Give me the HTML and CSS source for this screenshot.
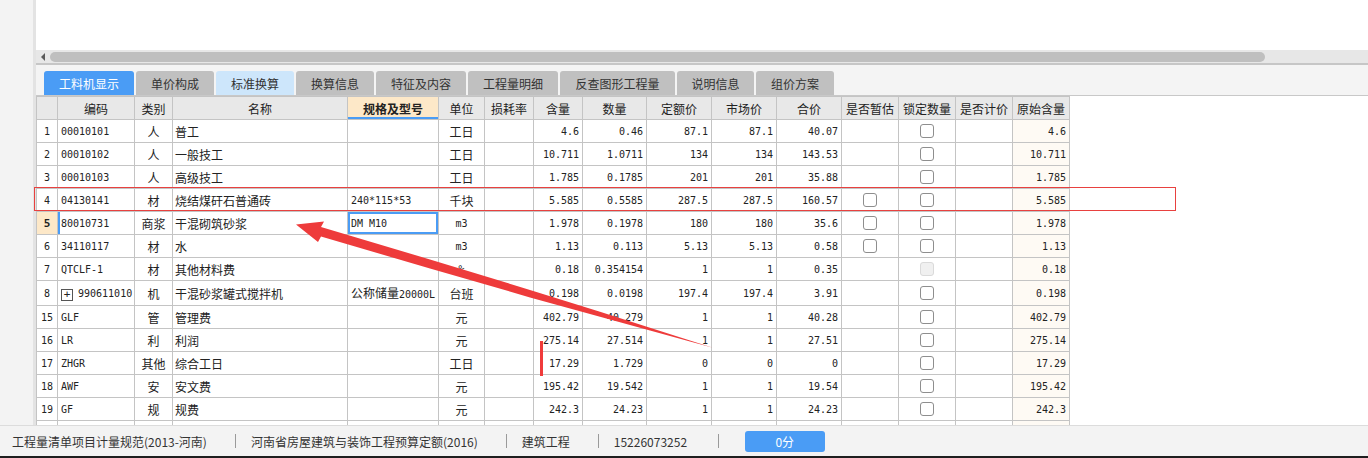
FILE: index.html
```html
<!DOCTYPE html>
<html lang="zh-CN">
<head>
<meta charset="utf-8">
<title>工料机显示</title>
<link rel="stylesheet" href="styles.css">
</head>
<body>
<div class="app">
  <div class="main">
    <aside class="sidebar"></aside>
    <section class="content">
      <div class="top-blank"></div>
      <div class="hscroll"><span class="arrow-left"></span><span class="thumb"></span></div>
      <nav class="tabs">
        <span class="tab active t90">工料机显示</span>
        <span class="tab t78">单价构成</span>
        <span class="tab light t78">标准换算</span>
        <span class="tab t78">换算信息</span>
        <span class="tab t90">特征及内容</span>
        <span class="tab t90">工程量明细</span>
        <span class="tab t115">反查图形工程量</span>
        <span class="tab t77">说明信息</span>
        <span class="tab t78">组价方案</span>
      </nav>
      <div class="grid-wrap">
        <table class="grid">
          <colgroup>
            <col class="w21"><col class="w77"><col class="w38"><col class="w175"><col class="w91"><col class="w46"><col class="w49"><col class="w49"><col class="w64"><col class="w65"><col class="w65"><col class="w65"><col class="w57"><col class="w57"><col class="w57"><col class="w57">
          </colgroup>
          <thead>
            <tr>
              <th></th><th>编码</th><th>类别</th><th>名称</th><th class="hl">规格及型号</th><th>单位</th><th>损耗率</th><th>含量</th><th>数量</th><th>定额价</th><th>市场价</th><th>合价</th><th>是否暂估</th><th>锁定数量</th><th>是否计价</th><th>原始含量</th>
            </tr>
          </thead>
          <tbody>
            <tr>
              <td class="n">1</td><td class="code">00010101</td><td class="cat">人</td><td class="name">普工</td><td class="spec"></td><td class="cat">工日</td><td></td><td class="r">4.6</td><td class="r">0.46</td><td class="r">87.1</td><td class="r">87.1</td><td class="r">40.07</td><td></td><td class="ck"><span class="cb"></span></td><td></td><td class="r orig">4.6</td>
            </tr>
            <tr>
              <td class="n">2</td><td class="code">00010102</td><td class="cat">人</td><td class="name">一般技工</td><td class="spec"></td><td class="cat">工日</td><td></td><td class="r">10.711</td><td class="r">1.0711</td><td class="r">134</td><td class="r">134</td><td class="r">143.53</td><td></td><td class="ck"><span class="cb"></span></td><td></td><td class="r orig">10.711</td>
            </tr>
            <tr>
              <td class="n">3</td><td class="code">00010103</td><td class="cat">人</td><td class="name">高级技工</td><td class="spec"></td><td class="cat">工日</td><td></td><td class="r">1.785</td><td class="r">0.1785</td><td class="r">201</td><td class="r">201</td><td class="r">35.88</td><td></td><td class="ck"><span class="cb"></span></td><td></td><td class="r orig">1.785</td>
            </tr>
            <tr>
              <td class="n">4</td><td class="code">04130141</td><td class="cat">材</td><td class="name">烧结煤矸石普通砖</td><td class="spec m">240*115*53</td><td class="cat">千块</td><td></td><td class="r">5.585</td><td class="r">0.5585</td><td class="r">287.5</td><td class="r">287.5</td><td class="r">160.57</td><td class="ck"><span class="cb"></span></td><td class="ck"><span class="cb"></span></td><td></td><td class="r orig">5.585</td>
            </tr>
            <tr>
              <td class="n cur">5</td><td class="code cur-left">80010731</td><td class="cat">商浆</td><td class="name">干混砌筑砂浆</td><td class="spec m focus">DM M10</td><td class="cat m">m3</td><td></td><td class="r">1.978</td><td class="r">0.1978</td><td class="r">180</td><td class="r">180</td><td class="r">35.6</td><td class="ck"><span class="cb"></span></td><td class="ck"><span class="cb"></span></td><td></td><td class="r orig">1.978</td>
            </tr>
            <tr>
              <td class="n">6</td><td class="code">34110117</td><td class="cat">材</td><td class="name">水</td><td class="spec"></td><td class="cat m">m3</td><td></td><td class="r">1.13</td><td class="r">0.113</td><td class="r">5.13</td><td class="r">5.13</td><td class="r">0.58</td><td class="ck"><span class="cb"></span></td><td class="ck"><span class="cb"></span></td><td></td><td class="r orig">1.13</td>
            </tr>
            <tr>
              <td class="n">7</td><td class="code">QTCLF-1</td><td class="cat">材</td><td class="name">其他材料费</td><td class="spec"></td><td class="cat m">%</td><td></td><td class="r">0.18</td><td class="r">0.354154</td><td class="r">1</td><td class="r">1</td><td class="r">0.35</td><td></td><td class="ck"><span class="cb off"></span></td><td></td><td class="r orig">0.18</td>
            </tr>
            <tr>
              <td class="n">8</td><td class="code"><span class="plus">+</span>990611010</td><td class="cat">机</td><td class="name">干混砂浆罐式搅拌机</td><td class="spec">公称储量<span class="m">20000L</span></td><td class="cat">台班</td><td></td><td class="r">0.198</td><td class="r">0.0198</td><td class="r">197.4</td><td class="r">197.4</td><td class="r">3.91</td><td></td><td class="ck"><span class="cb"></span></td><td></td><td class="r orig">0.198</td>
            </tr>
            <tr>
              <td class="n">15</td><td class="code">GLF</td><td class="cat">管</td><td class="name">管理费</td><td class="spec"></td><td class="cat">元</td><td></td><td class="r">402.79</td><td class="r">40.279</td><td class="r">1</td><td class="r">1</td><td class="r">40.28</td><td></td><td class="ck"><span class="cb"></span></td><td></td><td class="r orig">402.79</td>
            </tr>
            <tr>
              <td class="n">16</td><td class="code">LR</td><td class="cat">利</td><td class="name">利润</td><td class="spec"></td><td class="cat">元</td><td></td><td class="r">275.14</td><td class="r">27.514</td><td class="r">1</td><td class="r">1</td><td class="r">27.51</td><td></td><td class="ck"><span class="cb"></span></td><td></td><td class="r orig">275.14</td>
            </tr>
            <tr>
              <td class="n">17</td><td class="code">ZHGR</td><td class="cat">其他</td><td class="name">综合工日</td><td class="spec"></td><td class="cat">工日</td><td></td><td class="r">17.29</td><td class="r">1.729</td><td class="r">0</td><td class="r">0</td><td class="r">0</td><td></td><td class="ck"><span class="cb"></span></td><td></td><td class="r orig">17.29</td>
            </tr>
            <tr>
              <td class="n">18</td><td class="code">AWF</td><td class="cat">安</td><td class="name">安文费</td><td class="spec"></td><td class="cat">元</td><td></td><td class="r">195.42</td><td class="r">19.542</td><td class="r">1</td><td class="r">1</td><td class="r">19.54</td><td></td><td class="ck"><span class="cb"></span></td><td></td><td class="r orig">195.42</td>
            </tr>
            <tr>
              <td class="n">19</td><td class="code">GF</td><td class="cat">规</td><td class="name">规费</td><td class="spec"></td><td class="cat">元</td><td></td><td class="r">242.3</td><td class="r">24.23</td><td class="r">1</td><td class="r">1</td><td class="r">24.23</td><td></td><td class="ck"><span class="cb"></span></td><td></td><td class="r orig">242.3</td>
            </tr>
            <tr>
              <td class="n"></td><td class="code"></td><td class="cat"></td><td class="name"></td><td class="spec"></td><td class="cat"></td><td></td><td class="r"></td><td class="r"></td><td class="r"></td><td class="r"></td><td class="r"></td><td></td><td class="ck"><span class="cb"></span></td><td></td><td class="r orig"></td>
            </tr>
          </tbody>
        </table>
      </div>
    </section>
  </div>
  <footer class="status">
    <span class="st-text st-norm">工程量清单项目计量规范(2013-河南)</span>
    <span class="sep"></span>
    <span class="st-text">河南省房屋建筑与装饰工程预算定额(2016)</span>
    <span class="sep"></span>
    <span class="st-text">建筑工程</span>
    <span class="sep"></span>
    <span class="st-text st-phone">15226073252</span>
    <span class="sep"></span>
    <span class="score">0分</span>
  </footer>
  <div class="taskbar"></div>

  <div class="mark-box"></div>
  <div class="mark-bar"></div>
  <svg class="mark-arrow" width="1368" height="458" viewBox="0 0 1368 458">
    <polygon points="296,224.4 324,221.5 321,227 430,259.5 530,289.9 600,311.8 650,327.7 690,340.4 713,347.8 690,341.6 650,330.5 600,316.8 530,297.4 430,268.5 321,236.5 318,242" />
  </svg>
</div>
</body>
</html>
```

FILE: styles.css
```css
* { box-sizing: border-box; }
html, body { margin: 0; padding: 0; }
body {
  width: 1368px;
  height: 458px;
  overflow: hidden;
  background: #fff;
  font-family: "Noto Sans CJK SC", "Liberation Sans", sans-serif;
  font-size: 12px;
  color: #222;
}
.app {
  position: relative;
  width: 1368px;
  height: 458px;
  display: flex;
  flex-direction: column;
}
.main {
  display: flex;
  height: 425px;
  flex: 0 0 425px;
}
.sidebar {
  flex: 0 0 36px;
  background: #f3f3f3;
  border-right: 3px solid #e3e3e3;
}
.content {
  flex: 1;
  min-width: 0;
  display: flex;
  flex-direction: column;
}
.top-blank { height: 50px; flex: 0 0 50px; background: #fff; }
.hscroll {
  flex: 0 0 15px;
  height: 15px;
  background: #e7e7e7;
  border-bottom: 2px solid #c6c6c6;
  display: flex;
  align-items: center;
  padding-left: 5px;
}
.arrow-left {
  width: 0;
  height: 0;
  border-top: 4px solid transparent;
  border-bottom: 4px solid transparent;
  border-right: 4px solid #5a5a5a;
}
.thumb {
  margin-left: 5px;
  width: 1215px;
  height: 10px;
  border-radius: 5px;
  background: #bfbfbf;
}
.tabs {
  flex: 0 0 31px;
  height: 31px;
  background: #f4f4f4;
  border-bottom: 1px solid #c8c8c8;
  display: flex;
  align-items: flex-end;
  gap: 2px;
  padding-left: 8px;
}
.tab {
  height: 24px;
  display: flex;
  align-items: center;
  justify-content: center;
  background: #c0c0c0;
  color: #333;
  border-radius: 3px 3px 0 0;
  font-size: 12px;
}
.tab.active { background: #4a9cf5; color: #fff; }
.tab.light { background: #cde6fb; }
.t90 { width: 90px; }
.t78 { width: 78px; }
.t77 { width: 77px; }
.t115 { width: 115px; }

.grid-wrap {
  flex: 1;
  overflow: hidden;
  background: #fff;
}
.grid {
  border-collapse: collapse;
  table-layout: fixed;
  width: 1034px;
}
.w21 { width: 21px; }
.w77 { width: 77px; }
.w38 { width: 38px; }
.w175 { width: 175px; }
.w91 { width: 91px; }
.w46 { width: 46px; }
.w49 { width: 49px; }
.w64 { width: 64px; }
.w65 { width: 65px; }
.w57 { width: 57px; }

.grid th, .grid td {
  border: 1px solid #c4c4c4;
  height: 23px;
  padding: 0 3px;
  white-space: nowrap;
  overflow: hidden;
  font-size: 12px;
  font-weight: normal;
  color: #222;
}
.grid th {
  background: #e8e8e8;
  text-align: center;
  padding: 0;
}
.grid th.hl {
  background: #fde8c8;
  font-weight: bold;
  box-shadow: inset 0 -2px 0 #4a9cf5;
}
.grid td { padding-top: 2px; line-height: 20px; }
.m, .grid td.n, .grid td.code, .grid td.r, .grid td.m {
  font-family: "DejaVu Sans Mono", "Liberation Mono", monospace;
  font-size: 10px;
}
.grid td.n { text-align: center; padding-left: 0; padding-right: 0; }
.grid td.n.cur { background: #fde8c8; font-weight: bold; font-size: 11px; }
.grid td.cur-left { box-shadow: inset 2px 0 0 #4a9cf5; }
.grid td.focus { box-shadow: inset 0 0 0 2px #4a9cf5; }
.grid td.cat { text-align: center; padding-left: 0; padding-right: 0; }
.grid td.name { padding-left: 2px; }
.grid td.r { text-align: right; padding-right: 3px; }
.grid td.orig { background: #fefaf4; }
.grid td.ck { text-align: center; padding: 0; line-height: 0; }
.cb {
  display: inline-block;
  width: 14px;
  height: 14px;
  border: 1px solid #8e8e8e;
  border-radius: 3px;
  background: #fff;
  vertical-align: middle;
}
.cb.off { background: #f0f0f0; border-color: #dadada; }
.plus {
  display: inline-block;
  width: 12px;
  height: 12px;
  border: 1px solid #555;
  line-height: 10px;
  text-align: center;
  font-size: 11px;
  margin-right: 5px;
  vertical-align: -1px;
}

.status {
  flex: 0 0 31px;
  height: 31px;
  background: #f3f3f3;
  border-top: 1px solid #dcdcdc;
  display: flex;
  align-items: center;
  padding-left: 12px;
  font-size: 12px;
  color: #333;
}
.st-text { white-space: nowrap; }
.st-norm { min-width: 195px; }
.st-phone { min-width: 76px; }
.sep {
  width: 1px;
  height: 14px;
  background: #9a9a9a;
  margin: 0 15px 0 28px;
}
.score {
  margin-left: 11px;
  width: 80px;
  height: 21px;
  border-radius: 3px;
  background: #4a9cf5;
  color: #fff;
  font-size: 12px;
  display: flex;
  align-items: center;
  justify-content: center;
}
.taskbar { flex: 0 0 2px; height: 2px; background: #1e1e1e; }

.mark-box {
  position: absolute;
  left: 34px;
  top: 187px;
  width: 1142px;
  height: 24px;
  border: 1px solid #e8413f;
}
.mark-bar {
  position: absolute;
  left: 540px;
  top: 341px;
  width: 3px;
  height: 35px;
  background: #f03b3b;
}
.mark-arrow {
  position: absolute;
  left: 0;
  top: 0;
  pointer-events: none;
}
.mark-arrow polygon { fill: #ee3b3b; }
```
